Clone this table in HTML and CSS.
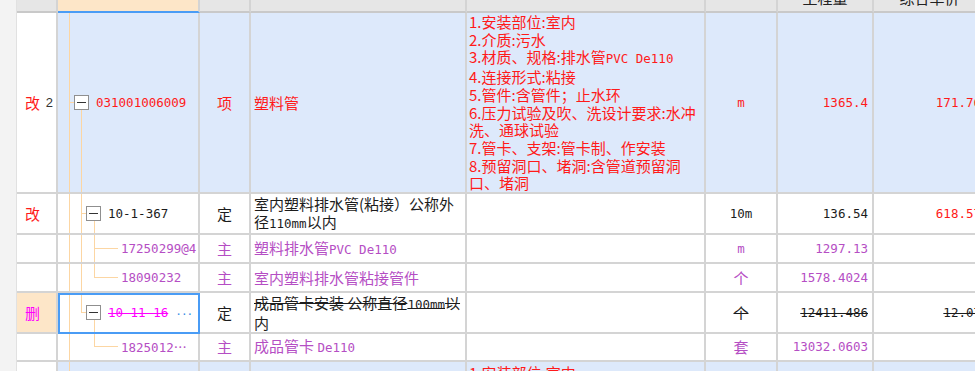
FILE: index.html
```html
<!DOCTYPE html>
<html lang="zh-CN">
<head>
<meta charset="utf-8">
<title>清单</title>
<link rel="stylesheet" href="styles.css">
</head>
<body>
<div class="page">
  <div class="strip"></div>
  <div class="grid">
    <div class="row">
      <div class="c h"></div>
      <div class="c h hsel"></div>
      <div class="c h"></div>
      <div class="c h"></div>
      <div class="c h"></div>
      <div class="c h"></div>
      <div class="c h">工程量</div>
      <div class="c h">综合单价</div>
    </div>

    <div class="row">
      <div class="c mk"><span class="red">改</span><span class="rn">2</span></div>
      <div class="c blue tree t1"><span class="box"></span><span class="code red gap">031001006009</span></div>
      <div class="c blue ctr red">项</div>
      <div class="c blue lt red">塑料管</div>
      <div class="c blue desc red"><div class="tx">1.安装部位:室内<br>2.介质:污水<br>3.材质、规格:排水管<span class="hw">PVC De110</span><br>4.连接形式:粘接<br>5.管件:含管件；止水环<br>6.压力试验及吹、洗设计要求:水冲<br>洗、通球试验<br>7.管卡、支架:管卡制、作安装<br>8.预留洞口、堵洞:含管道预留洞<br>口、堵洞</div></div>
      <div class="c blue ctr red num">m</div>
      <div class="c blue rt red num">1365.4</div>
      <div class="c blue rt red num">171.76</div>
    </div>

    <div class="row">
      <div class="c mk"><span class="red">改</span></div>
      <div class="c tree t2"><span class="box"></span><span class="code gap">10-1-367</span></div>
      <div class="c ctr">定</div>
      <div class="c lt"><div class="tx">室内塑料排水管(粘接）公称外<br>径<span class="hw">110mm</span>以内</div></div>
      <div class="c"></div>
      <div class="c ctr num">10m</div>
      <div class="c rt num">136.54</div>
      <div class="c rt red num">618.57</div>
    </div>

    <div class="row">
      <div class="c mk"></div>
      <div class="c tree t3"><span class="code pur">17250299@4</span></div>
      <div class="c ctr pur">主</div>
      <div class="c lt pur"><span class="tx">塑料排水管<span class="hw">PVC De110</span></span></div>
      <div class="c"></div>
      <div class="c ctr pur num">m</div>
      <div class="c rt pur num">1297.13</div>
      <div class="c"></div>
    </div>

    <div class="row">
      <div class="c mk"></div>
      <div class="c tree t4"><span class="code pur">18090232</span></div>
      <div class="c ctr pur">主</div>
      <div class="c lt pur">室内塑料排水管粘接管件</div>
      <div class="c"></div>
      <div class="c ctr pur">个</div>
      <div class="c rt pur num">1578.4024</div>
      <div class="c"></div>
    </div>

    <div class="row">
      <div class="c mk del"><span class="mag">删</span></div>
      <div class="c tree t5 selcell"><span class="box"></span><span class="code mag strike gap">10-11-16</span><span class="more">···</span></div>
      <div class="c ctr">定</div>
      <div class="c lt"><div class="tx"><span class="strike">成品管卡安装 公称直径<span class="hw">100mm</span>以</span><br>内</div></div>
      <div class="c"></div>
      <div class="c ctr strike">个</div>
      <div class="c rt num strike">12411.486</div>
      <div class="c rt num strike">12.07</div>
    </div>

    <div class="row">
      <div class="c mk"></div>
      <div class="c tree t6"><span class="tx pur"><span class="code">1825012</span><span class="ell">…</span></span></div>
      <div class="c ctr pur">主</div>
      <div class="c lt pur"><span class="tx">成品管卡 <span class="hw">De110</span></span></div>
      <div class="c"></div>
      <div class="c ctr pur">套</div>
      <div class="c rt pur num">13032.0603</div>
      <div class="c"></div>
    </div>

    <div class="row">
      <div class="c mk"></div>
      <div class="c blue tree t7"></div>
      <div class="c blue"></div>
      <div class="c blue"></div>
      <div class="c blue desc top red"><div class="tx">1.安装部位:室内<br>2.介质:污水</div></div>
      <div class="c blue"></div>
      <div class="c blue"></div>
      <div class="c blue"></div>
    </div>
  </div>
</div>
</body>
</html>
```

FILE: styles.css
```css
* { box-sizing: border-box; }
html, body { margin: 0; padding: 0; }
body {
  width: 975px;
  height: 371px;
  overflow: hidden;
  background: #ffffff;
  font-family: "Noto Sans CJK SC", "Noto Sans", sans-serif;
  font-size: 15px;
  color: #1c1c1c;
}
.page { display: flex; align-items: flex-start; height: 371px; overflow: hidden; }
.strip {
  flex: 0 0 17px;
  height: 371px;
  background: #f3f3f3;
  border-right: 1px solid #e1e1e1;
}
.grid {
  flex: 0 0 auto;
  display: grid;
  grid-template-columns: 41px 142px 51px 216px 239px 72px 96px 113px;
  grid-template-rows: 30px 181px 41px 29px 29px 41px 28px 40px;
  margin-top: -17px;
}
.row { display: contents; }
.c {
  display: flex;
  align-items: center;
  min-width: 0;
  overflow: hidden;
  white-space: nowrap;
  line-height: 18px;
  border-right: 2px solid #d4d4d4;
  border-bottom: 2px solid #d4d4d4;
}
.tx { display: block; }
.h {
  background: #e6e6e6;
  align-items: flex-end;
  justify-content: center;
  padding-bottom: 4px;
  border-bottom-color: #c9c9c9;
  color: #222;
}
.hsel { background: #fde6c8; border-bottom-color: #4a9cf5; }
.blue { background: #dde9fb; }
.ctr { justify-content: center; }
.rt { justify-content: flex-end; padding-right: 4px; }
.lt { padding-left: 3px; }
.desc { padding-left: 2px; line-height: 17.7px; }
.desc.top { align-items: flex-start; padding-top: 2px; }

.red { color: #ff1a1a; }
.pur { color: #b54ec4; }
.mag { color: #ff00ff; }
.strike { text-decoration: line-through; text-decoration-thickness: 1px; }

.mk { justify-content: space-between; padding-left: 8px; padding-right: 3px; }
.mk.del { background: #fde6c8; }
.rn { font-family: "Liberation Sans", sans-serif; font-size: 13px; color: #333; }

.num { font-family: "DejaVu Sans Mono", monospace; font-size: 12.5px; }
.hw { font-family: "DejaVu Sans Mono", monospace; font-size: 12.5px; }
.code { font-family: "DejaVu Sans Mono", monospace; font-size: 12.5px; }
.gap { margin-left: 7px; }
.more { color: #3a8ee6; margin-left: 8px; font-family: "Liberation Sans", sans-serif; font-size: 14px; letter-spacing: 1px; }
.ell { font-family: "Noto Sans CJK SC", sans-serif; font-size: 13px; }

.box {
  flex: 0 0 15px;
  width: 15px;
  height: 15px;
  border: 1px solid #8f8f8f;
  background: #ffffff;
  display: flex;
  align-items: center;
  justify-content: center;
}
.box::before {
  content: "";
  display: block;
  width: 9px;
  height: 1px;
  background: #333;
}

.tree { --tl: #fcd6a3; }
.t1 {
  padding-left: 16px;
  background:
    linear-gradient(var(--tl), var(--tl)) 11px 0 / 1px 100% no-repeat,
    linear-gradient(var(--tl), var(--tl)) 11px 89px / 5px 1px no-repeat,
    linear-gradient(var(--tl), var(--tl)) 23px 97px / 1px 100% no-repeat,
    #dde9fb;
}
.t2 {
  padding-left: 28px;
  background:
    linear-gradient(var(--tl), var(--tl)) 11px 0 / 1px 100% no-repeat,
    linear-gradient(var(--tl), var(--tl)) 23px 0 / 1px 100% no-repeat,
    linear-gradient(var(--tl), var(--tl)) 23px 19px / 5px 1px no-repeat,
    linear-gradient(var(--tl), var(--tl)) 36px 27px / 1px 100% no-repeat,
    #ffffff;
}
.t3 {
  padding-left: 63px;
  background:
    linear-gradient(var(--tl), var(--tl)) 11px 0 / 1px 100% no-repeat,
    linear-gradient(var(--tl), var(--tl)) 23px 0 / 1px 100% no-repeat,
    linear-gradient(var(--tl), var(--tl)) 36px 0 / 1px 100% no-repeat,
    linear-gradient(var(--tl), var(--tl)) 36px 13px / 24px 1px no-repeat,
    #ffffff;
}
.t4 {
  padding-left: 63px;
  background:
    linear-gradient(var(--tl), var(--tl)) 11px 0 / 1px 100% no-repeat,
    linear-gradient(var(--tl), var(--tl)) 23px 0 / 1px 100% no-repeat,
    linear-gradient(var(--tl), var(--tl)) 36px 0 / 1px 14px no-repeat,
    linear-gradient(var(--tl), var(--tl)) 36px 13px / 24px 1px no-repeat,
    #ffffff;
}
.t5 {
  padding-left: 28px;
  background:
    linear-gradient(var(--tl), var(--tl)) 11px 0 / 1px 100% no-repeat,
    linear-gradient(var(--tl), var(--tl)) 23px 0 / 1px 20px no-repeat,
    linear-gradient(var(--tl), var(--tl)) 23px 19px / 5px 1px no-repeat,
    linear-gradient(var(--tl), var(--tl)) 36px 27px / 1px 100% no-repeat,
    #ffffff;
}
.t6 {
  padding-left: 63px;
  background:
    linear-gradient(var(--tl), var(--tl)) 11px 0 / 1px 100% no-repeat,
    linear-gradient(var(--tl), var(--tl)) 36px 0 / 1px 13px no-repeat,
    linear-gradient(var(--tl), var(--tl)) 36px 12px / 24px 1px no-repeat,
    #ffffff;
}
.t7 {
  background:
    linear-gradient(var(--tl), var(--tl)) 11px 0 / 1px 100% no-repeat,
    #dde9fb;
}
.selcell { outline: 2px solid #4a9cf5; outline-offset: -2px; }
```
